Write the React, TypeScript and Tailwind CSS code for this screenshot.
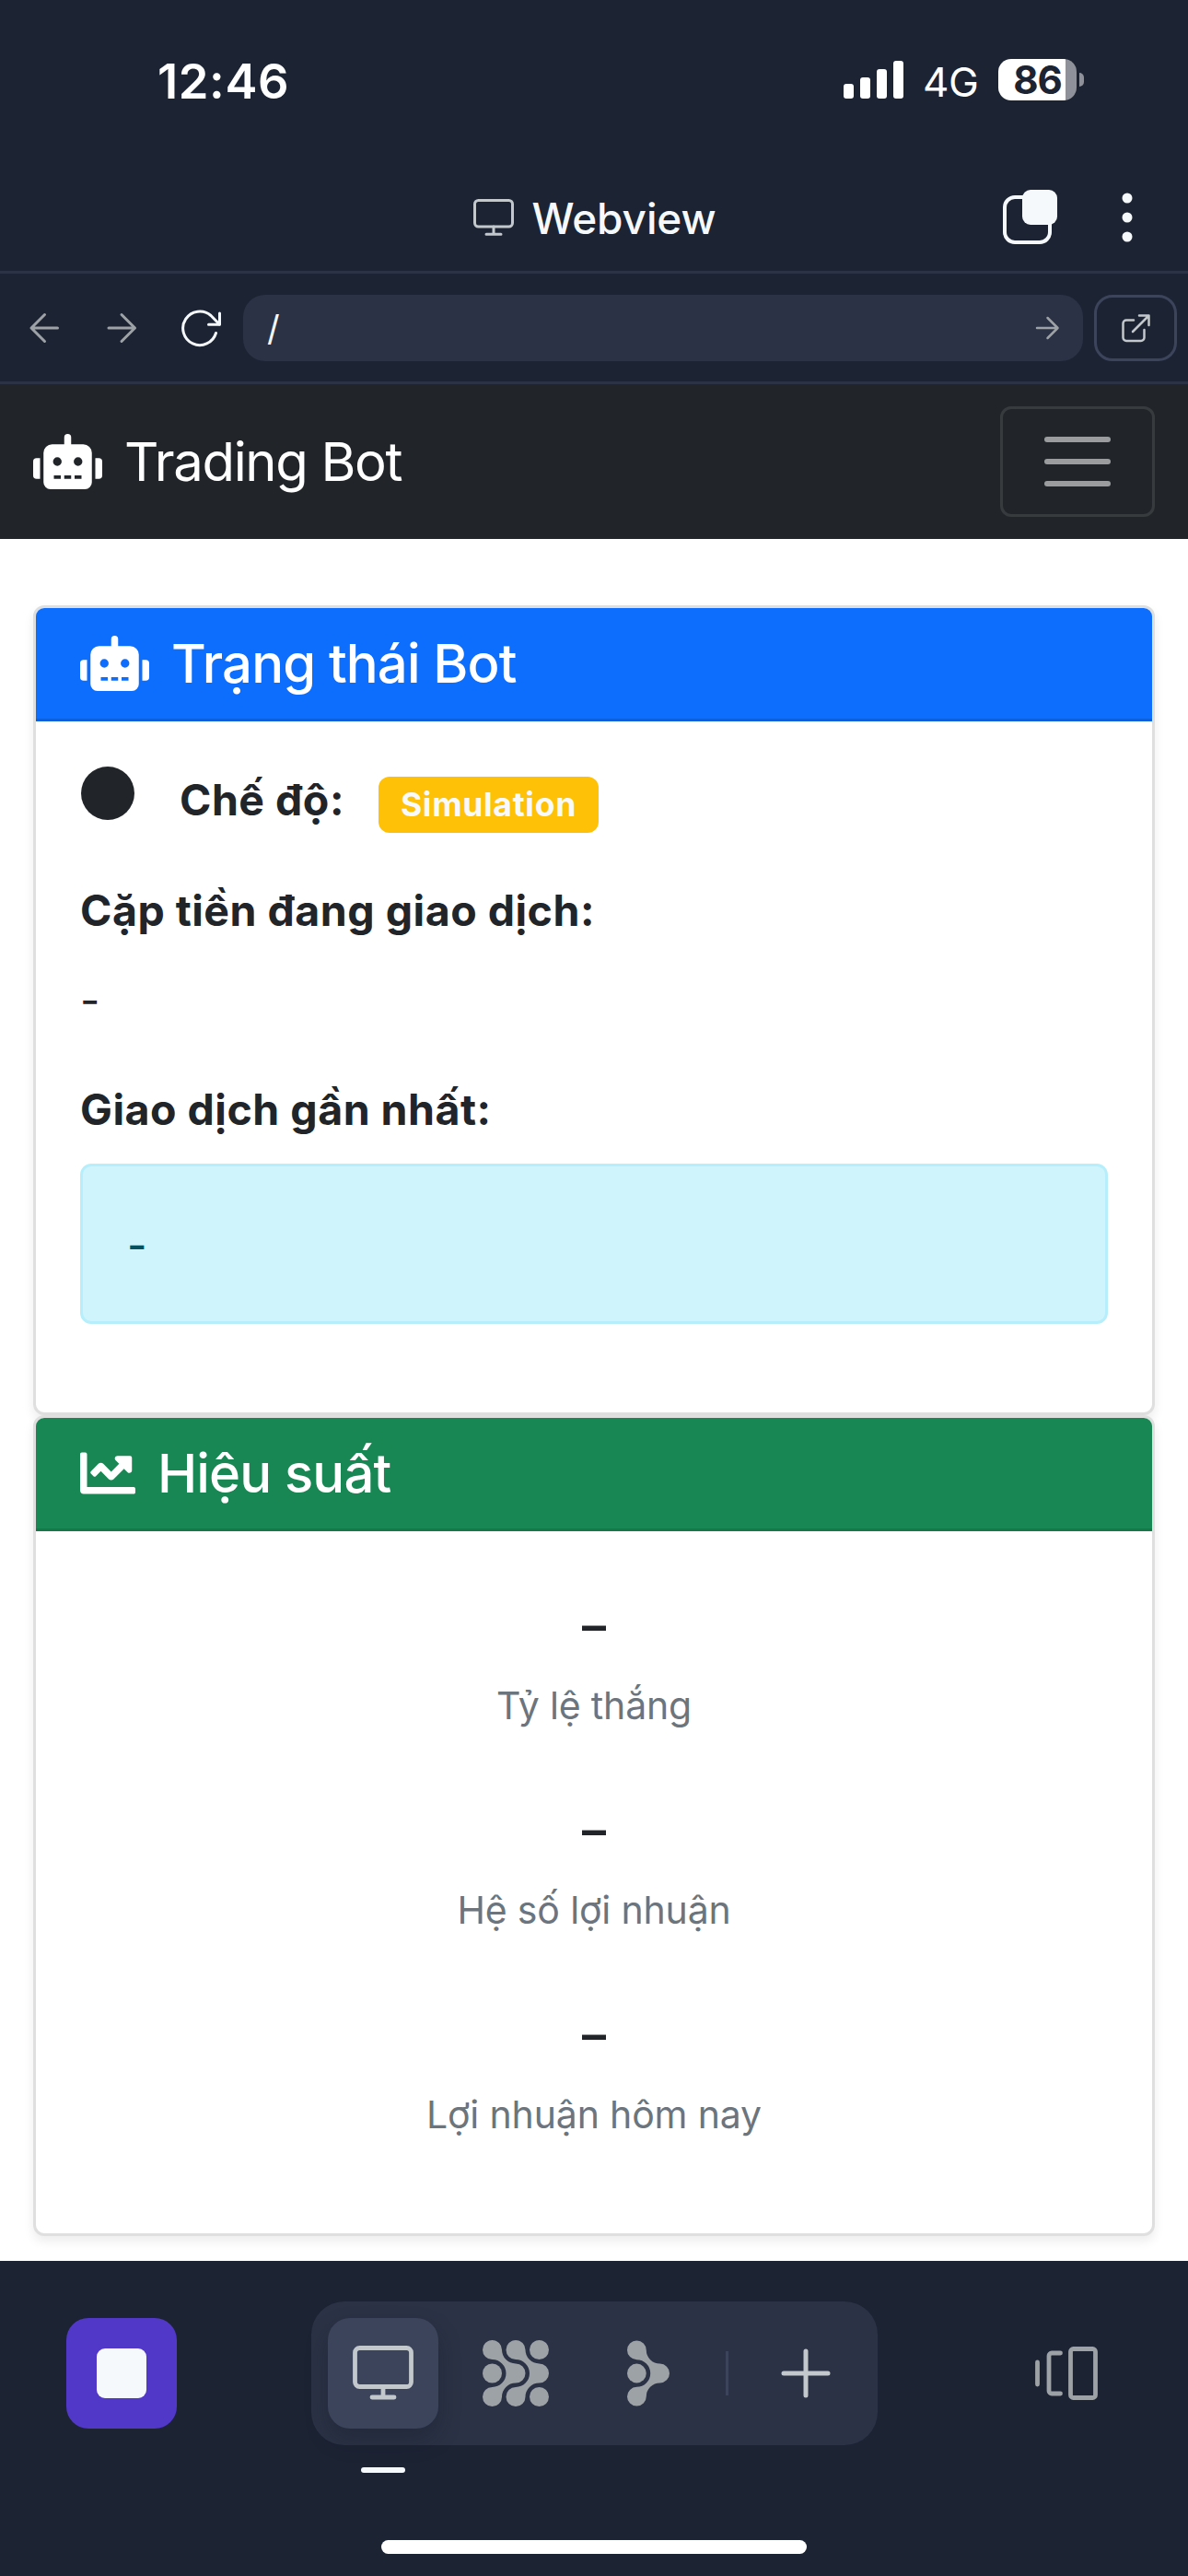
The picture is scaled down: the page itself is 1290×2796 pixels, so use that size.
import type { ReactNode } from "react";
import { FaChartLine, FaRobot } from "react-icons/fa";

function StatusBar() {
  return (
    <div className="flex h-[176px] items-start justify-between pl-[171px] pr-[113px] text-white">
      <div className="mt-[58px] text-[52.5px] font-semibold leading-[60px] tracking-[0.6px]">12:46</div>
      <div className="mt-[64px] flex h-[45px] items-center">
        <div className="flex h-[41px] items-end gap-[7px]">
          <div className="h-[16px] w-[11px] rounded-[3px] bg-white" />
          <div className="h-[23px] w-[11px] rounded-[3px] bg-white" />
          <div className="h-[32px] w-[11px] rounded-[3px] bg-white" />
          <div className="h-[41px] w-[11px] rounded-[3px] bg-white" />
        </div>
        <div className="ml-[21px] mt-[5px] w-[82px] text-[44px] leading-[45px] tracking-[-0.5px]">4G</div>
        <div className="flex h-[45px] w-[85px] items-center rounded-[14px] bg-[linear-gradient(to_right,#fff_73px,#8e9199_73px)]">
          <span className="w-[85px] text-center text-[42px] font-bold leading-[45px] tracking-[-1px] text-[#1c2333]">86</span>
        </div>
        <div className="ml-[3px] h-[15px] w-[5px] rounded-r-full bg-[#8e9199]" />
      </div>
    </div>
  );
}

function MonitorIcon({ size, stroke }: { size: "sm" | "lg"; stroke: number }) {
  return size === "sm" ? (
    <svg width="44" height="42" viewBox="0 0 44 42" fill="none" stroke="#c2c8cc" strokeWidth={stroke} strokeLinecap="round">
      <rect x="1.5" y="2.5" width="41" height="28.5" rx="4" />
      <path d="M22 31v8M14 39.2h16" />
    </svg>
  ) : (
    <svg width="66" height="62" viewBox="0 0 66 62" fill="none" stroke="#c2c8cc" strokeWidth={stroke} strokeLinecap="round">
      <rect x="2.5" y="3.5" width="61" height="42" rx="5" />
      <path d="M33 46v11M21 57h24" />
    </svg>
  );
}

function TitleBar() {
  return (
    <div className="relative flex h-[121px] items-center justify-center border-b-[3px] border-[#2b3245] text-[#f5f9fc]">
      <div className="flex items-center gap-[19px] pl-[2px] pt-[2px]">
        <MonitorIcon size="sm" stroke={3} />
        <span className="mt-[2px] text-[46px] font-medium leading-[60px] tracking-[-0.1px]">Webview</span>
      </div>
      <div className="absolute right-[60px] top-[28px] flex items-center gap-[70px]">
        <svg width="60" height="64" viewBox="0 0 60 64" fill="none">
          <rect x="3" y="10" width="49" height="49" rx="11" stroke="#f5f9fc" strokeWidth="4" />
          <rect x="22" y="2" width="38" height="38" rx="9" fill="#f5f9fc" />
        </svg>
        <svg width="12" height="64" viewBox="0 0 12 64" fill="#f5f9fc">
          <circle cx="6" cy="11" r="5.5" />
          <circle cx="6" cy="32" r="5.5" />
          <circle cx="6" cy="53" r="5.5" />
        </svg>
      </div>
    </div>
  );
}

function AddressBar() {
  return (
    <div className="flex h-[120px] items-center border-b-[3px] border-[#2b3245] pl-[30px] pr-[12px]">
      <svg width="36" height="36" viewBox="0 0 36 36" fill="none" stroke="#9da2a6" strokeWidth="3" strokeLinecap="round" strokeLinejoin="round">
        <path d="M32.500 18H4M18.500 3.500L4 18l14.500 14.500" />
      </svg>
      <svg className="ml-[48px]" width="36" height="36" viewBox="0 0 36 36" fill="none" stroke="#9da2a6" strokeWidth="3" strokeLinecap="round" strokeLinejoin="round">
        <path d="M4 18h28.500M18 3.500L32.500 18 18 32.500" />
      </svg>
      <svg className="ml-[44px]" width="48" height="44" viewBox="0 0 48 44" fill="none" stroke="#f5f9fc" strokeWidth="3" strokeLinecap="round" strokeLinejoin="round">
        <path d="M40.500 27.500A18.300 18.300 0 1 1 35 8.500L44 17.800" />
        <path d="M44.500 6v12.200H32.500" />
      </svg>
      <div className="ml-[22px] flex h-[72px] w-[912px] items-center justify-between rounded-[24px] bg-[#2b3245] pl-[26px] pr-[25px]">
        <span className="text-[38px] leading-[60px] text-[#f5f9fc]">/</span>
        <svg width="28" height="28" viewBox="0 0 28 28" fill="none" stroke="#9da2a6" strokeWidth="2.500" strokeLinecap="round" strokeLinejoin="round">
          <path d="M3 14h22M14.500 3L25.500 14l-11 11" />
        </svg>
      </div>
      <div className="ml-[12px] flex h-[72px] w-[90px] items-center justify-center rounded-[20px] border-[3px] border-[#3c445c]">
        <svg width="32" height="32" viewBox="0 0 32 32" fill="none" stroke="#c2c8cc" strokeWidth="2.500" strokeLinecap="round" strokeLinejoin="round">
          <path d="M14 7.500H6a3.500 3.500 0 0 0-3.500 3.500v15.500A3.500 3.500 0 0 0 6 30h16a3.500 3.500 0 0 0 3.500-3.500V18" />
          <path d="M20 2.500h10.500V13M30 3L13 20" />
        </svg>
      </div>
    </div>
  );
}

function Navbar() {
  return (
    <div className="flex h-[168px] items-center justify-between bg-[#212529] px-[36px]">
      <div className="flex items-center text-white">
        <FaRobot className="h-[60px] w-[75px]" />
        <span className="ml-[24px] text-[58px] leading-[72px] tracking-[-1.35px]">Trading Bot</span>
      </div>
      <div className="flex h-[120px] w-[168px] flex-col items-center justify-center gap-[18px] rounded-[12px] border-[3px] border-white/10">
        <div className="h-[6px] w-[72px] rounded-full bg-[#9b9c9e]" />
        <div className="h-[6px] w-[72px] rounded-full bg-[#9b9c9e]" />
        <div className="h-[6px] w-[72px] rounded-full bg-[#9b9c9e]" />
      </div>
    </div>
  );
}

function Card({ children, className }: { children: ReactNode; className: string }) {
  return (
    <section className={`rounded-[12px] border-[3px] border-[#dfdfdf] bg-white shadow-[0_6px_12px_rgba(0,0,0,0.075)] ${className}`}>
      {children}
    </section>
  );
}

function StatusCard() {
  return (
    <Card className="h-[879px]">
      <header className="flex h-[123px] items-center rounded-t-[9px] border-b-[3px] border-[#0b60dd] bg-[#0d6efd] pl-[48px] text-white">
        <FaRobot className="h-[60px] w-[75px]" />
        <h5 className="ml-[24px] text-[58px] font-medium leading-[72px] tracking-[-0.85px]">Trạng thái Bot</h5>
      </header>
      <div className="px-[48px] pt-[48px] text-[46.5px] leading-[72px] text-[#212529]">
        <div className="flex h-[73px] items-start">
          <div className="ml-px mt-px h-[58px] w-[58px] rounded-full bg-[#212529]" />
          <strong className="ml-[49px] mt-px font-bold tracking-[0.5px]">Chế độ:</strong>
          <span className="ml-[37px] mt-[12px] flex h-[61px] w-[239px] items-center justify-center rounded-[12px] bg-[#ffc107] text-[35.5px] font-bold leading-none tracking-[0.7px] text-[#f8f9fa]">
            Simulation
          </span>
        </div>
        <div className="mt-[48px] font-bold tracking-[0.5px]">Cặp tiền đang giao dịch:</div>
        <div className="mt-[25px]">-</div>
        <div className="mt-[47px] font-bold tracking-[0.5px]">Giao dịch gần nhất:</div>
        <div className="mt-[23px] flex h-[174px] items-center rounded-[12px] border-[3px] border-[#b6effb] bg-[#cff4fc] pl-[48px] pt-[2px] font-medium text-[#055160]">-</div>
      </div>
    </Card>
  );
}

const stats = ["Tỷ lệ thắng", "Hệ số lợi nhuận", "Lợi nhuận hôm nay"];

function PerformanceCard() {
  return (
    <Card className="h-[891px]">
      <header className="flex h-[123px] items-center rounded-t-[9px] border-b-[3px] border-[#167749] bg-[#198754] pl-[48px] text-white">
        <FaChartLine className="h-[60px] w-[60px]" />
        <h5 className="ml-[24px] text-[58px] font-medium leading-[72px] tracking-[-0.85px]">Hiệu suất</h5>
      </header>
      <div className="flex flex-col items-center pt-[56px] text-center">
        {stats.map((label) => (
          <div key={label} className="h-[222px]">
            <div className="text-[52px] font-semibold leading-[94px] text-[#212529]">–</div>
            <div className="mt-[7px] text-[41px] leading-[64px] tracking-[-0.15px] text-[#6c757d]">{label}</div>
          </div>
        ))}
      </div>
    </Card>
  );
}

const LINKED_DOTS =
  "M21 10.500A15 15 0 0 0 36 25.500A10.500 10.500 0 0 1 36 46.500A15 15 0 0 0 21 61.500A10.500 10.500 0 1 1 10.500 51A15 15 0 0 0 10.500 21A10.500 10.500 0 1 1 21 10.500Z";

function BottomBar() {
  return (
    <div className="flex h-[342px] flex-col items-center bg-[#1c2333]">
      <div className="flex w-full items-start pt-[44px]">
        <div className="ml-[72px] mt-[18px] flex h-[120px] w-[120px] items-center justify-center rounded-[24px] bg-[#5138c9]">
          <div className="h-[54px] w-[54px] rounded-[9px] bg-[#f5f9fc]" />
        </div>
        <div className="ml-[146px] flex h-[156px] w-[615px] items-center rounded-[36px] bg-[#2b3245] pl-[18px]">
          <div className="flex h-[120px] w-[120px] items-center justify-center rounded-[24px] bg-[#3c445c] shadow-[0_12px_24px_rgba(14,21,37,0.28)]">
            <MonitorIcon size="lg" stroke={4.8} />
          </div>
          <div className="ml-[24px] flex h-[120px] w-[120px] items-center justify-center">
            <svg width="72" height="72" viewBox="0 0 72 72" fill="#9da2a6">
              <path d={LINKED_DOTS} />
              <path d={LINKED_DOTS} transform="translate(25.500 0)" />
              <circle cx="61.500" cy="10.500" r="10.500" />
              <circle cx="10.500" cy="36" r="10.500" />
              <circle cx="61.500" cy="61.500" r="10.500" />
            </svg>
          </div>
          <div className="ml-[24px] flex h-[120px] w-[120px] items-center justify-center">
            <svg width="46" height="72" viewBox="0 0 46.500 72" fill="#9da2a6">
              <path d={LINKED_DOTS} />
              <circle cx="10.500" cy="36" r="10.500" />
            </svg>
          </div>
          <div className="ml-[24px] h-[48px] w-[3px] bg-[#3c445c]" />
          <div className="ml-[24px] flex h-[120px] w-[120px] items-center justify-center">
            <svg width="54" height="54" viewBox="0 0 54 54" stroke="#c2c8cc" strokeWidth="5" strokeLinecap="round">
              <path d="M27 3v48M3 27h48" />
            </svg>
          </div>
        </div>
        <svg className="ml-[170px] mt-[46px]" width="72" height="64" viewBox="0 0 72 64" fill="none" stroke="#9da2a6" strokeWidth="4.800" strokeLinecap="round" strokeLinejoin="round">
          <path d="M3.500 22.500v24M28.500 12.500H19a3 3 0 0 0-3 3v38a3 3 0 0 0 3 3h9.500" transform="translate(0 -2.500)" />
          <rect x="39.500" y="5.500" width="27" height="53" rx="3" />
        </svg>
      </div>
      <div className="mt-[24px] h-[6px] w-[48px] -translate-x-[229px] rounded-full bg-[#f5f9fc]" />
      <div className="mt-[73px] h-[15px] w-[462px] rounded-full bg-white" />
    </div>
  );
}

export default function App() {
  return (
    <div className="flex h-[2796px] w-[1290px] flex-col overflow-hidden bg-[#1c2333] font-['Inter',sans-serif]">
      <StatusBar />
      <TitleBar />
      <AddressBar />
      <Navbar />
      <main className="h-[1869px] overflow-hidden bg-white px-[36px] pt-[72px]">
        <StatusCard />
        <PerformanceCard />
      </main>
      <BottomBar />
    </div>
  );
}
